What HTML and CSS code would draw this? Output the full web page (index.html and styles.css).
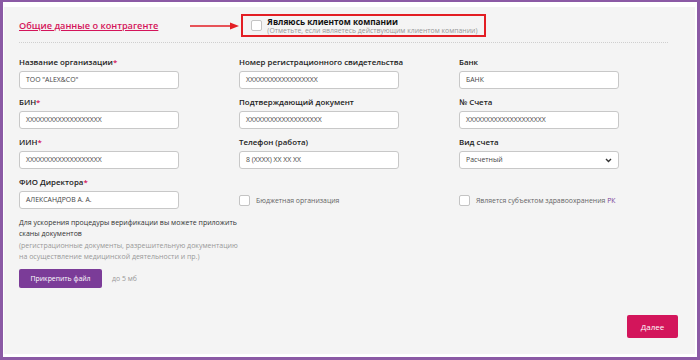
FILE: index.html
```html
<!DOCTYPE html>
<html lang="ru">
<head>
    <meta charset="UTF-8">
    <meta name="viewport" content="width=device-width, initial-scale=1.0">
    <title>Общие данные о контрагенте</title>
    <link rel="stylesheet" href="styles.css">
</head>
<body>
    <div class="frame">
        <div class="panel">
            <div class="head">
                <a href="#" class="section-title">Общие данные о контрагенте</a>
                <svg class="arrow" width="50" height="8" viewBox="0 0 50 8">
                    <line x1="0" y1="4" x2="42" y2="4" stroke="#e31e24" stroke-width="1.6"/>
                    <polygon points="40,0.5 49,4 40,7.5" fill="#e31e24"/>
                </svg>
                <label class="client-box">
                    <span class="check"></span>
                    <span class="client-text">
                        <span class="client-title">Являюсь клиентом компании</span>
                        <span class="client-note">(Отметьте, если являетесь действующим клиентом компании)</span>
                    </span>
                </label>
            </div>
            <div class="divider"></div>

            <div class="grid">
                <div class="field">
                    <div class="label">Название организации<span class="req">*</span></div>
                    <div class="input">ТОО "ALEX&amp;CO"</div>
                </div>
                <div class="field">
                    <div class="label">Номер регистрационного свидетельства</div>
                    <div class="input">XXXXXXXXXXXXXXXXXX</div>
                </div>
                <div class="field">
                    <div class="label">Банк</div>
                    <div class="input">БАНК</div>
                </div>

                <div class="field">
                    <div class="label">БИН<span class="req">*</span></div>
                    <div class="input">XXXXXXXXXXXXXXXXXXX</div>
                </div>
                <div class="field">
                    <div class="label">Подтверждающий документ</div>
                    <div class="input">XXXXXXXXXXXXXXXXXXX</div>
                </div>
                <div class="field">
                    <div class="label">№ Счета</div>
                    <div class="input">XXXXXXXXXXXXXXXXXXXX</div>
                </div>

                <div class="field">
                    <div class="label">ИИН<span class="req">*</span></div>
                    <div class="input">XXXXXXXXXXXXXXXXXXX</div>
                </div>
                <div class="field">
                    <div class="label">Телефон (работа)</div>
                    <div class="input">8 (XXXX) XX XX XX</div>
                </div>
                <div class="field">
                    <div class="label">Вид счета</div>
                    <div class="input select">
                        <span>Расчетный</span>
                        <svg width="7" height="5" viewBox="0 0 7 5"><path d="M1 1 L3.5 3.5 L6 1" fill="none" stroke="#333" stroke-width="1.4"/></svg>
                    </div>
                </div>

                <div class="field">
                    <div class="label">ФИО Директора<span class="req">*</span></div>
                    <div class="input">АЛЕКСАНДРОВ А. А.</div>
                </div>
                <label class="option">
                    <span class="check"></span>
                    <span>Бюджетная организация</span>
                </label>
                <label class="option">
                    <span class="check"></span>
                    <span>Является субъектом здравоохранения <span class="accent">РК</span></span>
                </label>
            </div>

            <div class="hint">
                <p>Для ускорения процедуры верификации вы можете приложить сканы документов</p>
                <p class="hint-muted">(регистрационные документы, разрешительную документацию на осуществление медицинской деятельности и пр.)</p>
            </div>

            <div class="attach">
                <button class="attach-button">Прикрепить файл</button>
                <span class="attach-limit">до 5 мб</span>
            </div>

            <div class="footer">
                <button class="next-button">Далее</button>
            </div>
        </div>
    </div>
</body>
</html>
```

FILE: styles.css
```css
body {
    margin: 0;
    background-color: #fff;
    font-family: "Open Sans", "Liberation Sans", sans-serif;
    color: #222;
}
.frame {
    width: 700px;
    height: 360px;
    box-sizing: border-box;
    border: 3px solid #8b5aa5;
    border-top-width: 2px;
    padding: 5px 2px 3px 1px;
}
.panel {
    height: 100%;
    box-sizing: border-box;
    background-color: #f4f4f4;
    padding: 7px 17px 16px 15px;
    display: flex;
    flex-direction: column;
}
.head {
    display: flex;
    align-items: center;
    height: 23px;
}
.section-title {
    font-size: 9.2px;
    font-weight: 600;
    color: #d4145a;
    text-decoration: underline;
}
.arrow {
    margin-left: 32px;
    margin-right: 1px;
}
.client-box {
    display: flex;
    align-items: center;
    gap: 5px;
    height: 23px;
    box-sizing: border-box;
    border: 2px solid #e31e24;
    padding: 0 6px 0 8px;
}
.client-text {
    display: flex;
    flex-direction: column;
}
.client-title {
    font-size: 8.3px;
    font-weight: 700;
    color: #111;
    line-height: 10px;
}
.client-note {
    font-size: 6.9px;
    color: #999;
    line-height: 8px;
}
.check {
    width: 11px;
    height: 11px;
    box-sizing: border-box;
    background-color: #fff;
    border: 1px solid #c4c4c4;
    border-radius: 2px;
    flex-shrink: 0;
}
.divider {
    border-top: 1px dotted #cfcfcf;
    margin: 5px 10px 13px 0;
}
.grid {
    display: grid;
    grid-template-columns: 160px 160px 160px;
    column-gap: 60px;
    row-gap: 7px;
}
.field {
    display: flex;
    flex-direction: column;
}
.label {
    font-size: 7.9px;
    font-weight: 600;
    line-height: 12px;
    margin-bottom: 3px;
    white-space: nowrap;
    color: #222;
}
.req {
    color: #d4145a;
}
.input {
    height: 18px;
    box-sizing: border-box;
    background-color: #fff;
    border: 1px solid #c8c8c8;
    border-radius: 3px;
    padding: 0 6px;
    font-size: 6.9px;
    line-height: 16px;
    color: #444;
}
.select {
    display: flex;
    align-items: center;
    justify-content: space-between;
    padding-right: 6px;
}
.option {
    display: flex;
    align-items: center;
    gap: 6px;
    align-self: end;
    height: 18px;
    font-size: 6.9px;
    white-space: nowrap;
    color: #666;
}
.accent {
    color: #7b3c98;
}
.hint {
    margin-top: 8px;
    width: 225px;
    font-size: 7px;
    line-height: 11.3px;
    color: #333;
}
.hint p {
    margin: 0;
}
.hint .hint-muted {
    color: #999;
}
.attach {
    display: flex;
    align-items: center;
    gap: 10px;
    margin-top: 7px;
}
.attach-button {
    font-family: inherit;
    font-size: 6.9px;
    color: #fff;
    background-color: #7b3c98;
    border: none;
    border-radius: 2px;
    width: 83px;
    height: 19px;
    padding: 0;
}
.attach-limit {
    font-size: 6.9px;
    color: #999;
}
.footer {
    margin-top: auto;
    display: flex;
    justify-content: flex-end;
}
.next-button {
    font-family: inherit;
    font-size: 8px;
    color: #fff;
    background-color: #d3155b;
    border: none;
    border-radius: 2px;
    width: 51px;
    height: 23px;
    padding: 0;
}
```
